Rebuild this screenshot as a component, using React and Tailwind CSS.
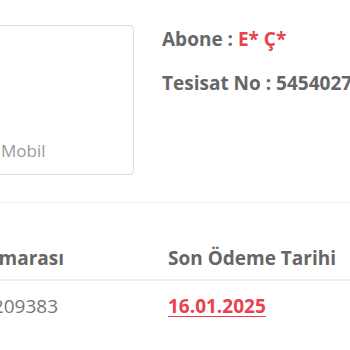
import React from "react";

const App = () => {
  return (
    <div
      className="w-[350px] h-[350px] overflow-hidden bg-white"
      style={{ fontFamily: '"Open Sans", sans-serif' }}
    >
      {/* üst kısım */}
      <div className="flex pt-[25px] h-[203px] border-b border-[#f0f0f0]">
        <div className="shrink-0 w-[150px] h-[150px] -ml-[16px] border border-[#dedede] rounded-[4px] flex flex-col justify-end pb-[15px] pl-[16px]">
          <span className="text-[17px] text-[#9a9a9a] leading-none">Mobil</span>
        </div>
        <div className="ml-[28px] pt-[1px] whitespace-nowrap text-[19px] font-bold text-[#666]">
          <p className="leading-[26px]">
            Abone : <span className="text-[#e8424f]">E* Ç*</span>
          </p>
          <p className="mt-[18px] leading-[26px]">Tesisat No : 5454027123</p>
        </div>
      </div>

      {/* tablo */}
      <div className="mt-[34px] whitespace-nowrap text-[19px]">
        <div className="flex items-center h-[44px] border-b-2 border-[#eee] font-bold text-[#666]">
          <div className="shrink-0 w-[168px] flex justify-end pr-[104px]">Fatura Numarası</div>
          <div>Son Ödeme Tarihi</div>
        </div>
        <div className="flex items-center h-[50px]">
          <div className="shrink-0 w-[168px] flex justify-end pr-[110px] text-[#777]">1234209383</div>
          <div className="font-bold text-[#e8424f] underline underline-offset-[3px]">16.01.2025</div>
        </div>
      </div>
    </div>
  );
};

export default App;
